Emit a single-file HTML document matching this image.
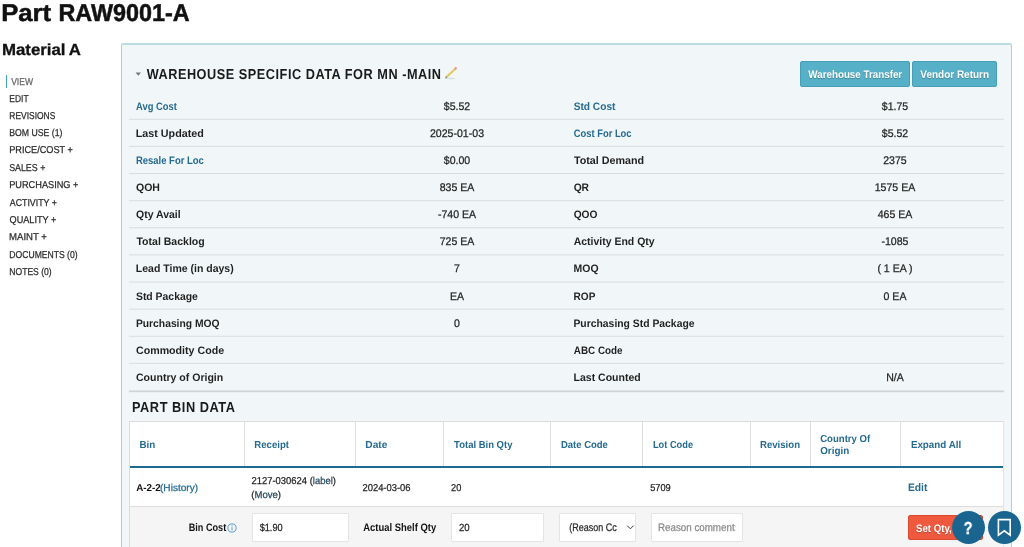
<!DOCTYPE html>
<html lang="en"><head><meta charset="utf-8"><title>Part RAW9001-A</title>
<style>
html,body{margin:0;padding:0;background:#fff;}
body{width:1024px;height:547px;overflow:hidden;position:relative;font-family:"Liberation Sans", sans-serif;text-rendering:geometricPrecision;}
.t{position:absolute;white-space:nowrap;line-height:1;transform-origin:0 0;}
.c{transform-origin:50% 0;}
#txt{position:absolute;left:0;top:0;width:1024px;height:547px;will-change:transform;}
.b{position:absolute;box-sizing:border-box;}
.panel{left:121px;top:43px;width:891px;height:520px;background:#f1f7f8;border:1px solid #a6d2db;border-top:2px solid #bcdde3;border-radius:2px;}
.sep{left:129px;width:875px;height:1px;background:#d9dfe2;}
.sep2{left:129px;width:875px;height:2px;background:#d2d8db;}
.btn{background:#56b0c7;border:1px solid #469fb6;border-radius:2px;}
.tbl{left:129px;top:421px;width:874.5px;height:130px;background:#fff;border:1px solid #dcdcdc;border-right-color:#e4e4e4;}
.vl{top:422px;width:1px;height:44px;background:#dedede;}
.hl{left:130px;width:873px;}
.inp{background:#fff;border:1px solid #e4e4e4;border-radius:1px;top:513.3px;height:28.4px;}
.circ{border-radius:50%;background:#196590;width:33px;height:33px;top:511px;}
</style></head><body>
<div id="static">
<div class="b panel"></div>
<div class="b" style="left:6px;top:75.3px;width:1.3px;height:12.4px;background:#3fa3bd;"></div>
<svg class="b" style="left:134.6px;top:71.5px" width="7" height="5" viewBox="0 0 7 5"><path d="M0.6 0.4h5.4l-2.7 3.4z" fill="#777"/></svg>
<svg class="b" style="left:443px;top:65px" width="16" height="16" viewBox="0 0 16 16">
<ellipse cx="7.5" cy="13.5" rx="4.6" ry="0.8" fill="#c5d0d5" opacity=".6"/>
<path d="M2 13.4l1-2.4 8.9-8.3 1.5 1.5-8.9 8.4z" fill="#e3c863"/>
<path d="M2 13.4l1-2.4 1.5 1.6z" fill="#8d887a"/>
<path d="M11.3 3.2l0.8-0.8a1.05 1.05 0 0 1 1.5 1.5l-0.8 0.8z" fill="#ea8791"/>
</svg>
<div class="b btn" style="left:800.3px;top:61px;width:110px;height:26px;"></div>
<div class="b btn" style="left:912.4px;top:61px;width:84.6px;height:26px;"></div>
<svg class="b" style="left:0;top:0" width="1024" height="547" viewBox="0 0 1024 547"><rect x="129" y="118.80" width="875" height="1" fill="#d7dde0"/><rect x="129" y="145.92" width="875" height="1" fill="#d7dde0"/><rect x="129" y="173.04" width="875" height="1" fill="#d7dde0"/><rect x="129" y="200.16" width="875" height="1" fill="#d7dde0"/><rect x="129" y="227.28" width="875" height="1" fill="#d7dde0"/><rect x="129" y="254.40" width="875" height="1" fill="#d7dde0"/><rect x="129" y="281.52" width="875" height="1" fill="#d7dde0"/><rect x="129" y="308.64" width="875" height="1" fill="#d7dde0"/><rect x="129" y="335.76" width="875" height="1" fill="#d7dde0"/><rect x="129" y="362.88" width="875" height="1" fill="#d7dde0"/><rect x="129" y="390.4" width="875" height="1.8" fill="#cfd6d9"/></svg>
<div class="b tbl"></div>
<div class="b hl" style="top:506.2px;height:45px;background:#f5f5f5;border-top:1px solid #dddddd;"></div>
<div class="b hl" style="top:466.2px;height:2.2px;background:#1e6a8e;"></div>
<div class="b vl" style="left:243.6px;"></div>
<div class="b vl" style="left:355.2px;"></div>
<div class="b vl" style="left:443.4px;"></div>
<div class="b vl" style="left:550.2px;"></div>
<div class="b vl" style="left:642.4px;"></div>
<div class="b vl" style="left:749.9px;"></div>
<div class="b vl" style="left:809.6px;"></div>
<div class="b vl" style="left:900.3px;"></div>
<div class="b inp" style="left:251.8px;width:97px;"></div>
<div class="b inp" style="left:451.3px;width:92.4px;"></div>
<div class="b inp" style="left:558.5px;width:77px;"></div>
<div class="b inp" style="left:650.5px;width:92.6px;"></div>
<svg class="b" style="left:626px;top:524px" width="9" height="7" viewBox="0 0 9 7"><path d="M1.2 1.6l3.2 3.2 3.2-3.2" fill="none" stroke="#333" stroke-width="0.95"/></svg>
<svg class="b" style="left:227.3px;top:522.6px" width="10" height="10" viewBox="0 0 10 10"><circle cx="5" cy="5" r="4.1" fill="none" stroke="#4a92c6" stroke-width="0.9"/><rect x="4.55" y="4.2" width="0.9" height="3.1" fill="#4a92c6"/><rect x="4.5" y="2.5" width="1" height="1" fill="#4a92c6"/></svg>
<div class="b" style="left:908.2px;top:515.2px;width:74.5px;height:24.8px;background:#ef5a3f;border:1px solid #d94a30;border-radius:2px;"></div>
<div class="b circ" style="left:951.6px;"></div>
<div class="b circ" style="left:988px;"></div>
<svg class="b" style="left:996px;top:517px" width="17" height="21" viewBox="0 0 17 21"><path d="M2.4 2.6h11.8v15.6l-5.9-4.4-5.9 4.4z" fill="none" stroke="#fff" stroke-width="1.6" stroke-linejoin="miter"/></svg>
</div>
<div id="txt">
<div class="t" id="t0" style="top:2.00px;font-size:24.30px;color:#111;font-weight:bold;-webkit-text-stroke:0.50px #111;left:1px;text-indent:0.16px;transform:scaleX(1.0582);"><span>Part</span></div>
<div class="t" id="t1" style="top:2.00px;font-size:24.30px;color:#111;font-weight:bold;-webkit-text-stroke:0.50px #111;left:58px;text-indent:0.49px;transform:scaleX(0.9623);"><span>RAW9001-A</span></div>
<div class="t" id="t2" style="top:43.00px;font-size:16.00px;color:#111;font-weight:bold;-webkit-text-stroke:0.30px #111;left:1px;text-indent:0.86px;transform:scaleX(1.0516);"><span>Material</span></div>
<div class="t" id="t3" style="top:43.00px;font-size:16.00px;color:#111;font-weight:bold;-webkit-text-stroke:0.30px #111;left:68px;text-indent:0.82px;transform:scaleX(1.0463);"><span>A</span></div>
<div class="t" id="t4" style="top:78.00px;font-size:10.00px;color:#666;-webkit-text-stroke:0.25px #666;left:11px;text-indent:0.19px;transform:scaleX(0.8532);"><span>VIEW</span></div>
<div class="t" id="t5" style="top:95.00px;font-size:10.00px;color:#2a2a2a;-webkit-text-stroke:0.25px #2a2a2a;left:9px;text-indent:0.42px;transform:scaleX(0.8423);"><span>EDIT</span></div>
<div class="t" id="t6" style="top:112.00px;font-size:10.00px;color:#2a2a2a;-webkit-text-stroke:0.25px #2a2a2a;left:9px;text-indent:0.36px;transform:scaleX(0.8446);"><span>REVISIONS</span></div>
<div class="t" id="t7" style="top:129.00px;font-size:10.00px;color:#2a2a2a;-webkit-text-stroke:0.25px #2a2a2a;left:9px;text-indent:0.34px;transform:scaleX(0.8691);"><span>BOM USE (1)</span></div>
<div class="t" id="t8" style="top:146.00px;font-size:10.00px;color:#2a2a2a;-webkit-text-stroke:0.25px #2a2a2a;left:9px;text-indent:0.22px;transform:scaleX(0.9163);"><span>PRICE/COST +</span></div>
<div class="t" id="t9" style="top:164.00px;font-size:10.00px;color:#2a2a2a;-webkit-text-stroke:0.25px #2a2a2a;left:9px;text-indent:0.16px;transform:scaleX(0.8849);"><span>SALES +</span></div>
<div class="t" id="t10" style="top:181.00px;font-size:10.00px;color:#2a2a2a;-webkit-text-stroke:0.25px #2a2a2a;left:9px;text-indent:0.22px;transform:scaleX(0.9195);"><span>PURCHASING +</span></div>
<div class="t" id="t11" style="top:199.00px;font-size:10.00px;color:#2a2a2a;-webkit-text-stroke:0.25px #2a2a2a;left:9px;text-indent:0.89px;transform:scaleX(0.8811);"><span>ACTIVITY +</span></div>
<div class="t" id="t12" style="top:216.00px;font-size:10.00px;color:#2a2a2a;-webkit-text-stroke:0.25px #2a2a2a;left:9px;text-indent:0.66px;transform:scaleX(0.9124);"><span>QUALITY +</span></div>
<div class="t" id="t13" style="top:233.00px;font-size:10.00px;color:#2a2a2a;-webkit-text-stroke:0.25px #2a2a2a;left:9px;text-indent:0.06px;transform:scaleX(0.9591);"><span>MAINT +</span></div>
<div class="t" id="t14" style="top:251.00px;font-size:10.00px;color:#2a2a2a;-webkit-text-stroke:0.25px #2a2a2a;left:9px;text-indent:0.37px;transform:scaleX(0.8600);"><span>DOCUMENTS (0)</span></div>
<div class="t" id="t15" style="top:268.00px;font-size:10.00px;color:#2a2a2a;-webkit-text-stroke:0.25px #2a2a2a;left:9px;text-indent:0.38px;transform:scaleX(0.8567);"><span>NOTES (0)</span></div>
<div class="t" id="t16" style="top:68.00px;font-size:14.40px;color:#1a1a1a;font-weight:bold;letter-spacing:0.60px;left:146px;text-indent:0.77px;transform:scaleX(0.8830);"><span>WAREHOUSE SPECIFIC DATA FOR MN -MAIN</span></div>
<div class="t" id="t17" style="top:401.00px;font-size:14.40px;color:#1a1a1a;font-weight:bold;letter-spacing:0.60px;left:132px;text-indent:0.02px;transform:scaleX(0.8876);"><span>PART BIN DATA</span></div>
<div class="t" id="t18" style="top:102.00px;font-size:10.90px;color:#246a91;font-weight:bold;left:136px;text-indent:0.12px;transform:scaleX(0.8598);"><span>Avg Cost</span></div>
<div class="t" id="t19" style="top:102.00px;font-size:10.90px;color:#246a91;font-weight:bold;left:573px;text-indent:0.69px;transform:scaleX(0.9334);"><span>Std Cost</span></div>
<div class="t c" id="t20" style="top:102.00px;font-size:11.00px;color:#1f1f1f;-webkit-text-stroke:0.25px #1f1f1f;left:457.10px;width:200px;margin-left:-100px;text-align:center;transform:scaleX(0.9600);"><span>$5.52</span></div>
<div class="t c" id="t21" style="top:102.00px;font-size:11.00px;color:#1f1f1f;-webkit-text-stroke:0.25px #1f1f1f;left:894.80px;width:200px;margin-left:-100px;text-align:center;transform:scaleX(0.9600);"><span>$1.75</span></div>
<div class="t" id="t22" style="top:129.00px;font-size:10.90px;color:#1f1f1f;font-weight:bold;left:135px;text-indent:0.78px;transform:scaleX(0.9866);"><span>Last Updated</span></div>
<div class="t" id="t23" style="top:129.00px;font-size:10.90px;color:#246a91;font-weight:bold;left:573px;text-indent:0.86px;transform:scaleX(0.8607);"><span>Cost For Loc</span></div>
<div class="t c" id="t24" style="top:129.00px;font-size:11.00px;color:#1f1f1f;-webkit-text-stroke:0.25px #1f1f1f;left:457.10px;width:200px;margin-left:-100px;text-align:center;transform:scaleX(0.9600);"><span>2025-01-03</span></div>
<div class="t c" id="t25" style="top:129.00px;font-size:11.00px;color:#1f1f1f;-webkit-text-stroke:0.25px #1f1f1f;left:894.80px;width:200px;margin-left:-100px;text-align:center;transform:scaleX(0.9600);"><span>$5.52</span></div>
<div class="t" id="t26" style="top:156.00px;font-size:10.90px;color:#246a91;font-weight:bold;left:135px;text-indent:1.08px;transform:scaleX(0.8700);"><span>Resale For Loc</span></div>
<div class="t" id="t27" style="top:156.00px;font-size:10.90px;color:#1f1f1f;font-weight:bold;left:573px;text-indent:0.94px;transform:scaleX(0.9861);"><span>Total Demand</span></div>
<div class="t c" id="t28" style="top:156.00px;font-size:11.00px;color:#1f1f1f;-webkit-text-stroke:0.25px #1f1f1f;left:457.10px;width:200px;margin-left:-100px;text-align:center;transform:scaleX(0.9600);"><span>$0.00</span></div>
<div class="t c" id="t29" style="top:156.00px;font-size:11.00px;color:#1f1f1f;-webkit-text-stroke:0.25px #1f1f1f;left:894.80px;width:200px;margin-left:-100px;text-align:center;transform:scaleX(0.9600);"><span>2375</span></div>
<div class="t" id="t30" style="top:183.00px;font-size:10.90px;color:#1f1f1f;font-weight:bold;left:135px;text-indent:1.02px;transform:scaleX(0.9675);"><span>QOH</span></div>
<div class="t" id="t31" style="top:183.00px;font-size:10.90px;color:#1f1f1f;font-weight:bold;left:573px;text-indent:0.68px;transform:scaleX(0.9429);"><span>QR</span></div>
<div class="t c" id="t32" style="top:183.00px;font-size:11.00px;color:#1f1f1f;-webkit-text-stroke:0.25px #1f1f1f;left:457.10px;width:200px;margin-left:-100px;text-align:center;transform:scaleX(0.9600);"><span>835 EA</span></div>
<div class="t c" id="t33" style="top:183.00px;font-size:11.00px;color:#1f1f1f;-webkit-text-stroke:0.25px #1f1f1f;left:894.80px;width:200px;margin-left:-100px;text-align:center;transform:scaleX(0.9600);"><span>1575 EA</span></div>
<div class="t" id="t34" style="top:210.00px;font-size:10.90px;color:#1f1f1f;font-weight:bold;left:136px;transform:scaleX(0.9625);"><span>Qty Avail</span></div>
<div class="t" id="t35" style="top:210.00px;font-size:10.90px;color:#1f1f1f;font-weight:bold;left:573px;text-indent:0.70px;transform:scaleX(0.9371);"><span>QOO</span></div>
<div class="t c" id="t36" style="top:210.00px;font-size:11.00px;color:#1f1f1f;-webkit-text-stroke:0.25px #1f1f1f;left:457.10px;width:200px;margin-left:-100px;text-align:center;transform:scaleX(0.9600);"><span>-740 EA</span></div>
<div class="t c" id="t37" style="top:210.00px;font-size:11.00px;color:#1f1f1f;-webkit-text-stroke:0.25px #1f1f1f;left:894.80px;width:200px;margin-left:-100px;text-align:center;transform:scaleX(0.9600);"><span>465 EA</span></div>
<div class="t" id="t38" style="top:237.00px;font-size:10.90px;color:#1f1f1f;font-weight:bold;left:136px;text-indent:0.47px;transform:scaleX(0.9662);"><span>Total Backlog</span></div>
<div class="t" id="t39" style="top:237.00px;font-size:10.90px;color:#1f1f1f;font-weight:bold;left:573px;text-indent:0.74px;transform:scaleX(0.9621);"><span>Activity End Qty</span></div>
<div class="t c" id="t40" style="top:237.00px;font-size:11.00px;color:#1f1f1f;-webkit-text-stroke:0.25px #1f1f1f;left:457.10px;width:200px;margin-left:-100px;text-align:center;transform:scaleX(0.9600);"><span>725 EA</span></div>
<div class="t c" id="t41" style="top:237.00px;font-size:11.00px;color:#1f1f1f;-webkit-text-stroke:0.25px #1f1f1f;left:894.80px;width:200px;margin-left:-100px;text-align:center;transform:scaleX(0.9600);"><span>-1085</span></div>
<div class="t" id="t42" style="top:264.00px;font-size:10.90px;color:#1f1f1f;font-weight:bold;left:135px;text-indent:0.84px;transform:scaleX(0.9646);"><span>Lead Time (in days)</span></div>
<div class="t" id="t43" style="top:264.00px;font-size:10.90px;color:#1f1f1f;font-weight:bold;left:573px;text-indent:0.58px;transform:scaleX(0.9610);"><span>MOQ</span></div>
<div class="t c" id="t44" style="top:264.00px;font-size:11.00px;color:#1f1f1f;-webkit-text-stroke:0.25px #1f1f1f;left:457.10px;width:200px;margin-left:-100px;text-align:center;transform:scaleX(0.9600);"><span>7</span></div>
<div class="t c" id="t45" style="top:264.00px;font-size:11.00px;color:#1f1f1f;-webkit-text-stroke:0.25px #1f1f1f;left:894.80px;width:200px;margin-left:-100px;text-align:center;transform:scaleX(0.9600);"><span>( 1 EA )</span></div>
<div class="t" id="t46" style="top:292.00px;font-size:10.90px;color:#1f1f1f;font-weight:bold;left:135px;text-indent:1.01px;transform:scaleX(0.9561);"><span>Std Package</span></div>
<div class="t" id="t47" style="top:292.00px;font-size:10.90px;color:#1f1f1f;font-weight:bold;left:573px;text-indent:0.60px;transform:scaleX(0.9236);"><span>ROP</span></div>
<div class="t c" id="t48" style="top:292.00px;font-size:11.00px;color:#1f1f1f;-webkit-text-stroke:0.25px #1f1f1f;left:457.10px;width:200px;margin-left:-100px;text-align:center;transform:scaleX(0.9600);"><span>EA</span></div>
<div class="t c" id="t49" style="top:292.00px;font-size:11.00px;color:#1f1f1f;-webkit-text-stroke:0.25px #1f1f1f;left:894.80px;width:200px;margin-left:-100px;text-align:center;transform:scaleX(0.9600);"><span>0 EA</span></div>
<div class="t" id="t50" style="top:319.00px;font-size:10.90px;color:#1f1f1f;font-weight:bold;left:135px;text-indent:0.99px;transform:scaleX(0.9466);"><span>Purchasing MOQ</span></div>
<div class="t" id="t51" style="top:319.00px;font-size:10.90px;color:#1f1f1f;font-weight:bold;left:573px;text-indent:0.48px;transform:scaleX(0.9524);"><span>Purchasing Std Package</span></div>
<div class="t c" id="t52" style="top:319.00px;font-size:11.00px;color:#1f1f1f;-webkit-text-stroke:0.25px #1f1f1f;left:457.10px;width:200px;margin-left:-100px;text-align:center;transform:scaleX(0.9600);"><span>0</span></div>
<div class="t" id="t53" style="top:346.00px;font-size:10.90px;color:#1f1f1f;font-weight:bold;left:135px;text-indent:1.02px;transform:scaleX(0.9770);"><span>Commodity Code</span></div>
<div class="t" id="t54" style="top:346.00px;font-size:10.90px;color:#1f1f1f;font-weight:bold;left:573px;text-indent:0.90px;transform:scaleX(0.9053);"><span>ABC Code</span></div>
<div class="t" id="t55" style="top:373.00px;font-size:10.90px;color:#1f1f1f;font-weight:bold;left:136px;transform:scaleX(0.9678);"><span>Country of Origin</span></div>
<div class="t" id="t56" style="top:373.00px;font-size:10.90px;color:#1f1f1f;font-weight:bold;left:573px;text-indent:0.60px;transform:scaleX(0.9646);"><span>Last Counted</span></div>
<div class="t c" id="t57" style="top:373.00px;font-size:11.00px;color:#1f1f1f;-webkit-text-stroke:0.25px #1f1f1f;left:894.80px;width:200px;margin-left:-100px;text-align:center;transform:scaleX(0.9600);"><span>N/A</span></div>
<div class="t" id="t58" style="top:70.00px;font-size:10.90px;color:#fff;font-weight:bold;left:808px;text-indent:0.35px;transform:scaleX(0.9000);text-shadow:0 1px 1px rgba(0,0,0,.25);"><span>Warehouse Transfer</span></div>
<div class="t" id="t59" style="top:70.00px;font-size:10.90px;color:#fff;font-weight:bold;left:920px;text-indent:0.34px;transform:scaleX(0.9158);text-shadow:0 1px 1px rgba(0,0,0,.25);"><span>Vendor Return</span></div>
<div class="t" id="t60" style="top:441.00px;font-size:10.20px;color:#246a91;font-weight:bold;left:139px;text-indent:0.51px;transform:scaleX(0.9644);"><span>Bin</span></div>
<div class="t" id="t61" style="top:441.00px;font-size:10.20px;color:#246a91;font-weight:bold;left:254px;text-indent:0.37px;transform:scaleX(0.9411);"><span>Receipt</span></div>
<div class="t" id="t62" style="top:441.00px;font-size:10.20px;color:#246a91;font-weight:bold;left:365px;text-indent:0.32px;transform:scaleX(0.9956);"><span>Date</span></div>
<div class="t" id="t63" style="top:441.00px;font-size:10.20px;color:#246a91;font-weight:bold;left:454px;text-indent:0.12px;transform:scaleX(0.9312);"><span>Total Bin Qty</span></div>
<div class="t" id="t64" style="top:441.00px;font-size:10.20px;color:#246a91;font-weight:bold;left:560px;text-indent:1.00px;transform:scaleX(0.9322);"><span>Date Code</span></div>
<div class="t" id="t65" style="top:441.00px;font-size:10.20px;color:#246a91;font-weight:bold;left:652px;text-indent:1.07px;transform:scaleX(0.9077);"><span>Lot Code</span></div>
<div class="t" id="t66" style="top:441.00px;font-size:10.20px;color:#246a91;font-weight:bold;left:760px;text-indent:0.04px;transform:scaleX(0.9413);"><span>Revision</span></div>
<div class="t" id="t67" style="top:435.00px;font-size:10.20px;color:#246a91;font-weight:bold;left:820px;text-indent:0.23px;transform:scaleX(0.9394);"><span>Country Of</span></div>
<div class="t" id="t68" style="top:447.00px;font-size:10.20px;color:#246a91;font-weight:bold;left:820px;text-indent:0.20px;transform:scaleX(0.9653);"><span>Origin</span></div>
<div class="t" id="t69" style="top:441.00px;font-size:10.20px;color:#246a91;font-weight:bold;left:910px;text-indent:0.93px;transform:scaleX(0.9616);"><span>Expand All</span></div>
<div class="t" id="t70" style="top:484.00px;font-size:10.00px;color:#111;font-weight:bold;left:136px;text-indent:0.20px;transform:scaleX(0.9847);"><span>A-2-2</span></div>
<div class="t" id="t71" style="top:484.00px;font-size:10.00px;color:#246a91;-webkit-text-stroke:0.25px #246a91;left:159px;text-indent:0.97px;transform:scaleX(1.0100);"><span>(History)</span></div>
<div class="t" id="t72" style="top:477.00px;font-size:10.00px;color:#1f1f1f;-webkit-text-stroke:0.25px #1f1f1f;left:251px;text-indent:0.54px;transform:scaleX(0.9424);"><span>2127-030624 (<span style="color:#246a91">label</span>)</span></div>
<div class="t" id="t73" style="top:491.00px;font-size:10.00px;color:#1f1f1f;-webkit-text-stroke:0.25px #1f1f1f;left:251px;text-indent:0.33px;transform:scaleX(0.9550);"><span>(<span style="color:#246a91">Move</span>)</span></div>
<div class="t" id="t74" style="top:484.00px;font-size:10.00px;color:#1f1f1f;-webkit-text-stroke:0.25px #1f1f1f;left:362px;text-indent:0.50px;transform:scaleX(0.9392);"><span>2024-03-06</span></div>
<div class="t" id="t75" style="top:484.00px;font-size:10.00px;color:#1f1f1f;-webkit-text-stroke:0.25px #1f1f1f;left:451px;text-indent:0.04px;transform:scaleX(0.9236);"><span>20</span></div>
<div class="t" id="t76" style="top:484.00px;font-size:10.00px;color:#1f1f1f;-webkit-text-stroke:0.25px #1f1f1f;left:650px;text-indent:0.18px;transform:scaleX(0.9196);"><span>5709</span></div>
<div class="t" id="t77" style="top:483.00px;font-size:10.90px;color:#246a91;font-weight:bold;left:907px;text-indent:0.95px;transform:scaleX(0.9498);"><span>Edit</span></div>
<div class="t" id="t78" style="top:523.00px;font-size:10.90px;color:#111;font-weight:bold;left:188px;text-indent:0.81px;transform:scaleX(0.8382);"><span>Bin Cost</span></div>
<div class="t" id="t79" style="top:524.00px;font-size:10.40px;color:#1f1f1f;-webkit-text-stroke:0.25px #1f1f1f;left:259px;text-indent:0.73px;transform:scaleX(0.8823);"><span>$1.90</span></div>
<div class="t" id="t80" style="top:523.00px;font-size:10.90px;color:#111;font-weight:bold;left:363px;text-indent:0.34px;transform:scaleX(0.8665);"><span>Actual Shelf Qty</span></div>
<div class="t" id="t81" style="top:524.00px;font-size:10.40px;color:#1f1f1f;-webkit-text-stroke:0.25px #1f1f1f;left:458px;text-indent:1.08px;transform:scaleX(0.9230);"><span>20</span></div>
<div class="t" id="t82" style="top:523.00px;font-size:10.90px;color:#2a2a2a;-webkit-text-stroke:0.25px #2a2a2a;left:569px;text-indent:0.22px;transform:scaleX(0.8255);"><span>(Reason Cc</span></div>
<div class="t" id="t83" style="top:523.00px;font-size:10.90px;color:#8a8a8a;-webkit-text-stroke:0.25px #8a8a8a;left:657px;text-indent:1.06px;transform:scaleX(0.8983);width:86.5px;overflow:hidden;"><span>Reason comments</span></div>
<div class="t" id="t84" style="top:524.00px;font-size:10.90px;color:#fff;font-weight:bold;left:916px;text-indent:0.08px;transform:scaleX(0.8838);text-shadow:0 1px 1px rgba(0,0,0,.25);"><span>Set Qty,</span></div>
<div class="t c" id="t85" style="top:520.00px;font-size:17.40px;color:#fff;font-weight:bold;-webkit-text-stroke:0.30px #fff;left:967.50px;width:200px;margin-left:-100px;text-align:center;transform:scaleX(0.8400);"><span>?</span></div>
</div>
</body></html>
